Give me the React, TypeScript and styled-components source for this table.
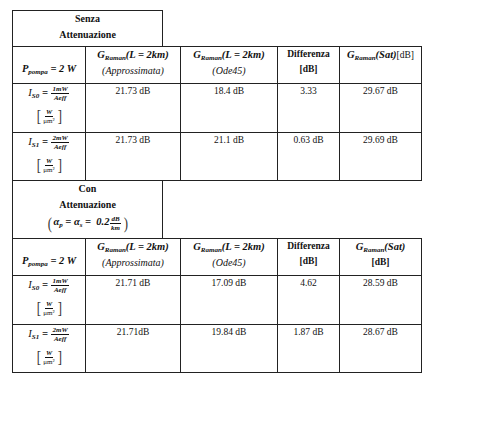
import React from 'react';
import styled, { createGlobalStyle } from 'styled-components';

const GlobalStyle = createGlobalStyle`
  body {
    margin: 0;
    background: #fff;
    font-family: 'Liberation Serif', 'Times New Roman', serif;
    color: #111;
  }
`;

const Page = styled.div`
  display: flex;
  flex-direction: column;
  width: 409px;
  padding: 10px 0 0 12px;
`;

const Caption = styled.div<{ $top?: boolean; $h: number }>`
  box-sizing: border-box;
  width: 151px;
  height: ${(p) => p.$h}px;
  border-left: 1px solid #222;
  border-right: 1px solid #222;
  border-top: ${(p) => (p.$top ? '1px solid #222' : 'none')};
  display: flex;
  flex-direction: column;
  align-items: center;
  font-size: 10px;
  font-weight: bold;
  line-height: 16px;
`;

const Table = styled.table`
  width: 409px;
  border-collapse: collapse;
  table-layout: fixed;
`;

const Cell = styled.td<{ $h: number; $pad?: number }>`
  border: 1px solid #222;
  height: ${(p) => p.$h}px;
  padding: ${(p) => p.$pad ?? 0}px 2px 0;
  box-sizing: border-box;
  vertical-align: top;
  text-align: center;
  font-size: 9.5px;
  line-height: 15px;
`;

const Value = styled.div`
  line-height: 12px;
  padding-top: 1px;
`;

const Math = styled.span<{ $bold?: boolean }>`
  font-style: italic;
  font-weight: ${(p) => (p.$bold ? 'bold' : 'normal')};
  font-size: ${(p) => (p.$bold ? 10.5 : 10)}px;
  white-space: nowrap;
`;

const Bold = styled.span`
  font-weight: bold;
`;

const Sub = styled.sub`
  font-size: 7px;
  vertical-align: -2px;
  line-height: 0;
`;

const Frac = styled.span<{ $size: number }>`
  display: inline-flex;
  flex-direction: column;
  align-items: center;
  vertical-align: middle;
  font-size: ${(p) => p.$size}px;
  line-height: ${(p) => p.$size + 1}px;
  margin: 0 1px;
`;

const Num = styled.span`
  border-bottom: 0.8px solid #111;
  padding: 0 1px;
`;

const Intensity = styled.div`
  display: flex;
  flex-direction: column;
  align-items: center;
  gap: 6px;
  padding-top: 1px;
`;

const Bracketed = styled.span<{ $kind: 'square' | 'round' }>`
  display: inline-flex;
  align-items: center;
  gap: 1px;
  &::before,
  &::after {
    font-size: 17px;
    font-weight: normal;
    font-style: normal;
    line-height: 17px;
    transform: scaleX(0.75);
    color: #333;
  }
  &::before {
    content: '${(p) => (p.$kind === 'square' ? '[' : '(')}';
  }
  &::after {
    content: '${(p) => (p.$kind === 'square' ? ']' : ')')}';
  }
`;

const Formula = styled.div`
  display: flex;
  align-items: center;
  height: 20px;
`;

function IntensityCell({ num, idx }: { num: string; idx: string }) {
  return (
    <Intensity>
      <Math $bold>
        <i style={{ fontWeight: 'normal' }}>I</i>
        <Sub>S{idx}</Sub> ={' '}
        <Frac $size={7}>
          <Num>{num}</Num>
          <span>Aeff</span>
        </Frac>
      </Math>
      <Bracketed $kind="square">
        <Frac $size={7}>
          <Num>
            <Math $bold style={{ fontSize: 7 }}>W</Math>
          </Num>
          <span style={{ fontStyle: 'normal', fontWeight: 'normal' }}>μm²</span>
        </Frac>
      </Bracketed>
    </Intensity>
  );
}

const GRaman = ({ arg }: { arg: string }) => (
  <Math $bold>
    G<Sub>Raman</Sub>({arg})
  </Math>
);

type Row = { idx: string; num: string; vals: string[] };

function GainTable({
  rows,
  satHeader,
}: {
  rows: Row[];
  satHeader: React.ReactNode;
}) {
  return (
    <Table>
      <colgroup>
        <col style={{ width: 73 }} />
        <col style={{ width: 95 }} />
        <col style={{ width: 97 }} />
        <col style={{ width: 62 }} />
        <col style={{ width: 82 }} />
      </colgroup>
      <tbody>
        <tr>
          <Cell $h={37} $pad={14}>
            <Math $bold>
              P<Sub>pompa</Sub> = 2 W
            </Math>
          </Cell>
          <Cell $h={37}>
            <GRaman arg="L = 2km" />
            <br />
            <Math>(Approssimata)</Math>
          </Cell>
          <Cell $h={37}>
            <GRaman arg="L = 2km" />
            <br />
            <Math>(Ode45)</Math>
          </Cell>
          <Cell $h={37}>
            <Bold>Differenza</Bold>
            <br />
            <Bold>[dB]</Bold>
          </Cell>
          <Cell $h={37}>{satHeader}</Cell>
        </tr>
        {rows.map((r, i) => (
          <tr key={r.idx}>
            <Cell $h={i === 0 ? 49 : 48}>
              <IntensityCell num={r.num} idx={r.idx} />
            </Cell>
            {r.vals.map((v, j) => (
              <Cell key={j} $h={i === 0 ? 49 : 48}>
                <Value>{v}</Value>
              </Cell>
            ))}
          </tr>
        ))}
      </tbody>
    </Table>
  );
}

export default function App() {
  return (
    <>
      <GlobalStyle />
      <Page>
        <Caption $top $h={36}>
          <span>Senza</span>
          <span>Attenuazione</span>
        </Caption>
        <GainTable
          satHeader={
            <>
              <GRaman arg="Sat" />
              [dB]
            </>
          }
          rows={[
            { idx: '0', num: '1mW', vals: ['21.73 dB', '18.4 dB', '3.33', '29.67 dB'] },
            { idx: '1', num: '2mW', vals: ['21.73 dB', '21.1 dB', '0.63 dB', '29.69 dB'] },
          ]}
        />
        <Caption $h={57}>
          <span>Con</span>
          <span>Attenuazione</span>
          <Formula>
            <Bracketed $kind="round">
              <Math $bold>
                α<Sub>p</Sub> = α<Sub>s</Sub> = &nbsp;0.2
                <Frac $size={7}>
                  <Num>dB</Num>
                  <span>km</span>
                </Frac>
              </Math>
            </Bracketed>
          </Formula>
        </Caption>
        <GainTable
          satHeader={
            <>
              <GRaman arg="Sat" />
              <br />
              <Bold>[dB]</Bold>
            </>
          }
          rows={[
            { idx: '0', num: '1mW', vals: ['21.71 dB', '17.09 dB', '4.62', '28.59 dB'] },
            { idx: '1', num: '2mW', vals: ['21.71dB', '19.84 dB', '1.87 dB', '28.67 dB'] },
          ]}
        />
      </Page>
    </>
  );
}
